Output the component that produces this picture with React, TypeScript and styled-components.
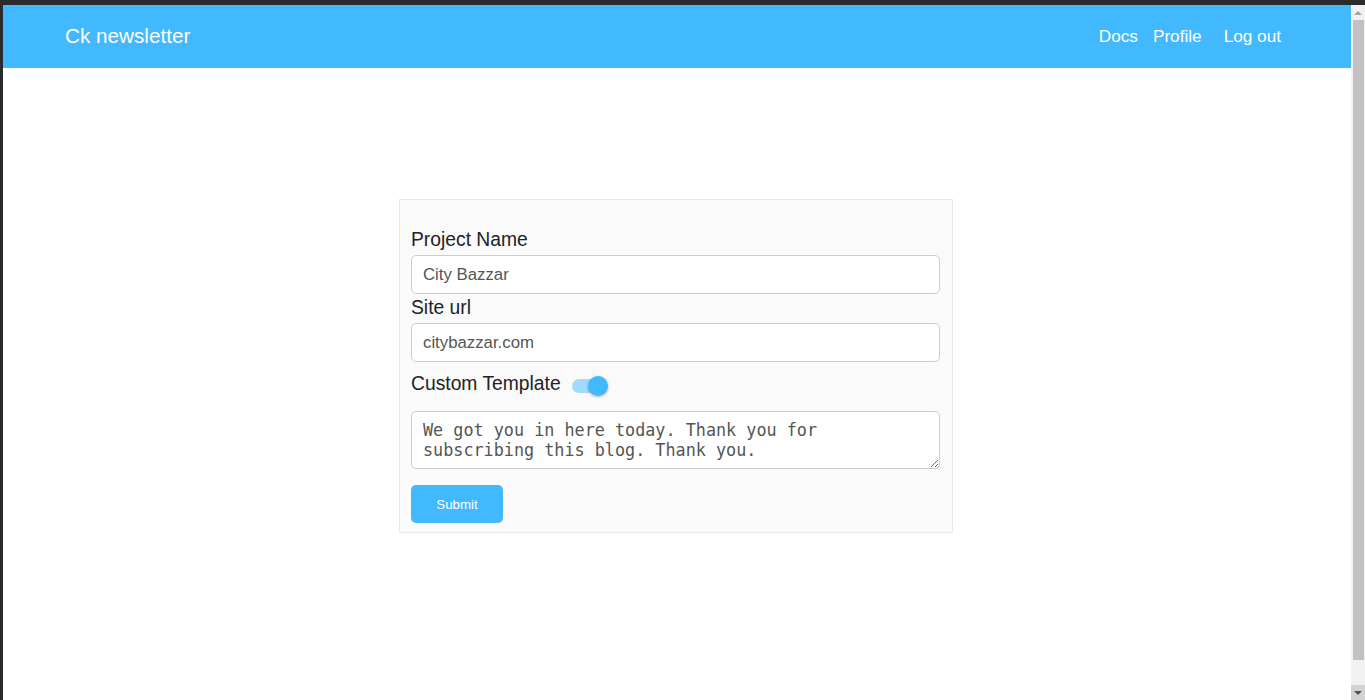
import React from "react";
import styled, { createGlobalStyle } from "styled-components";

const Global = createGlobalStyle`
  html, body { margin: 0; padding: 0; overflow: hidden; background: #2b2b2b; }
  body { font-family: "Liberation Sans", Arial, sans-serif; }
  * { box-sizing: border-box; }
`;

const Frame = styled.div`
  width: 1365px;
  height: 700px;
  display: flex;
  flex-direction: column;
  background: #2b2b2b;
`;

const TopEdge = styled.div`
  height: 5px;
  flex: none;
`;

const Body = styled.div`
  flex: 1;
  display: flex;
  min-height: 0;
`;

const LeftEdge = styled.div`
  width: 3px;
  flex: none;
`;

const Page = styled.main`
  flex: 1;
  background: #ffffff;
  display: flex;
  flex-direction: column;
`;

const Navbar = styled.header`
  height: 63px;
  background: #42b8fe;
  display: flex;
  align-items: center;
  justify-content: space-between;
  padding: 0 70px 0 62px;
  color: #ffffff;
`;

const Brand = styled.div`
  font-size: 20.7px;
  margin-top: -1px;
`;

const NavLinks = styled.nav`
  display: flex;
  align-items: center;
`;

const NavLink = styled.a<{ $gap?: number }>`
  font-size: 17.2px;
  color: #ffffff;
  text-decoration: none;
  margin-right: ${(p) => p.$gap ?? 0}px;
`;

const Card = styled.form`
  width: 554px;
  margin: 131px auto 0;
  background: #fafafa;
  border: 1px solid #e8e8e8;
  padding: 29px 12px 9px 11px;
  display: flex;
  flex-direction: column;
  position: relative;
  left: -1px;
`;

const Label = styled.label`
  font-size: 19.3px;
  color: #222222;
  margin-bottom: 4px;
  line-height: 22px;
`;

const Input = styled.input`
  width: 100%;
  height: 39px;
  margin-bottom: 3px;
  border: 1px solid #cccccc;
  border-radius: 5px;
  background: #ffffff;
  padding: 0 11px;
  font-family: "Liberation Sans", Arial, sans-serif;
  font-size: 16.8px;
  color: #555555;
  outline: none;
`;

const ToggleRow = styled.div`
  display: flex;
  align-items: center;
  margin-top: 7px;
  height: 24px;
  gap: 11px;
`;

const RowLabel = styled.span`
  font-size: 19.3px;
  color: #222222;
  line-height: 22px;
`;

const Switch = styled.span`
  position: relative;
  width: 36px;
  height: 20px;
  display: inline-block;
  margin-top: 4px;
`;

const Track = styled.span`
  position: absolute;
  left: 0;
  top: 3px;
  width: 34px;
  height: 14px;
  border-radius: 7px;
  background: #a0dbfe;
`;

const Knob = styled.span`
  position: absolute;
  left: 16px;
  top: 0;
  width: 20px;
  height: 20px;
  border-radius: 50%;
  background: #42b8fe;
  box-shadow: 0 1px 3px rgba(0, 0, 0, 0.3);
`;

const TextArea = styled.textarea`
  width: 100%;
  height: 58px;
  margin-top: 15px;
  border: 1px solid #cccccc;
  border-radius: 5px;
  background: #ffffff;
  padding: 8px 11px;
  font-family: "DejaVu Sans Mono", monospace;
  font-size: 16.8px;
  color: #555555;
  resize: vertical;
  outline: none;
  display: block;
`;

const SubmitButton = styled.button`
  width: 92px;
  height: 38px;
  margin-top: 16px;
  border: none;
  border-radius: 5px;
  background: #42b8fe;
  color: #ffffff;
  font-family: "Liberation Sans", Arial, sans-serif;
  font-size: 13.3px;
`;

const Scrollbar = styled.div`
  width: 14px;
  flex: none;
  background: #f1f1f1;
  display: flex;
  flex-direction: column;
`;

const ArrowButton = styled.div<{ $active?: boolean }>`
  height: 15px;
  flex: none;
  display: flex;
  align-items: center;
  justify-content: center;
  background: ${(p) => (p.$active ? "#d2d2d2" : "#f1f1f1")};
`;

const ArrowUp = styled.span`
  width: 0;
  height: 0;
  border-left: 4px solid transparent;
  border-right: 4px solid transparent;
  border-bottom: 4px solid #a3a3a3;
`;

const ArrowDown = styled.span`
  width: 0;
  height: 0;
  border-left: 4px solid transparent;
  border-right: 4px solid transparent;
  border-top: 4px solid #505050;
`;

const Thumb = styled.div`
  height: 640px;
  margin: 0 1px 0 2px;
  background: #c1c1c1;
  flex: none;
`;

const TrackFill = styled.div`
  flex: 1;
`;

export default function App() {
  return (
    <>
      <Global />
      <Frame>
        <TopEdge />
        <Body>
          <LeftEdge />
          <Page>
            <Navbar>
              <Brand>Ck newsletter</Brand>
              <NavLinks>
                <NavLink href="#" $gap={15}>Docs</NavLink>
                <NavLink href="#" $gap={22}>Profile</NavLink>
                <NavLink href="#">Log out</NavLink>
              </NavLinks>
            </Navbar>
            <Card onSubmit={(e) => e.preventDefault()}>
              <Label>Project Name</Label>
              <Input defaultValue="City Bazzar" />
              <Label>Site url</Label>
              <Input defaultValue="citybazzar.com" />
              <ToggleRow>
                <RowLabel>Custom Template</RowLabel>
                <Switch>
                  <Track />
                  <Knob />
                </Switch>
              </ToggleRow>
              <TextArea defaultValue="We got you in here today. Thank you for subscribing this blog. Thank you." />
              <div>
                <SubmitButton type="submit">Submit</SubmitButton>
              </div>
            </Card>
          </Page>
          <Scrollbar>
            <ArrowButton>
              <ArrowUp />
            </ArrowButton>
            <Thumb />
            <TrackFill />
            <ArrowButton $active>
              <ArrowDown />
            </ArrowButton>
          </Scrollbar>
        </Body>
      </Frame>
    </>
  );
}
